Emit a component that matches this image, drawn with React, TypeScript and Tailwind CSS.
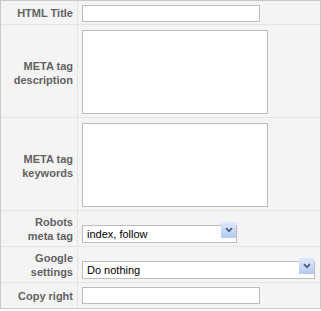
import React from "react"

const labelCls =
  "w-[77px] shrink-0 border-r border-[#e4e4e4] flex items-center justify-end pr-[4px] text-right text-[11px] font-bold leading-[14px] text-[#626262]"

const inputCls =
  "h-[17px] border border-[#bcbcbc] bg-white px-[3px] text-[11px] text-black outline-none"

const SelectBox: React.FC<{ value: string; className: string }> = ({ value, className }) => (
  <div className={`relative h-[18px] ${className}`}>
    <select
      defaultValue={value}
      className="h-full w-full appearance-none border border-[#bcbcbc] bg-white pl-[4px] text-[11px] text-black outline-none"
    >
      <option>{value}</option>
    </select>
    <span className="pointer-events-none absolute bottom-[1px] right-[1px] top-[1px] flex w-[15px] items-center justify-center bg-gradient-to-b from-[#e0e9fb] to-[#b3c9f2]">
      <svg width="8" height="6" viewBox="0 0 8 6">
        <path d="M1 1.2 L4 4.2 L7 1.2" fill="none" stroke="#4b5f86" strokeWidth="1.8" />
      </svg>
    </span>
  </div>
)

const App: React.FC = () => {
  return (
    <div className="h-[311px] w-[321px] bg-white" style={{ fontFamily: '"Liberation Sans", Arial, sans-serif' }}>
      <div className="flex flex-col border border-[#c9c9c9] bg-[#f4f4f4]">
        <div className="flex h-[24px] border-b border-[#e4e4e4]">
          <div className={labelCls}>HTML Title</div>
          <div className="flex flex-1 items-center pl-[4px] pt-[2px]">
            <input type="text" className={`${inputCls} w-[178px]`} />
          </div>
        </div>

        <div className="flex h-[93px] border-b border-[#e4e4e4]">
          <div className={`${labelCls} pt-[4px]`}>
            META tag
            <br />
            description
          </div>
          <div className="flex flex-1 items-start pl-[4px] pt-[5px]">
            <textarea className="h-[84px] w-[186px] resize-none border border-[#bcbcbc] bg-white outline-none" />
          </div>
        </div>

        <div className="flex h-[93px] border-b border-[#e4e4e4]">
          <div className={`${labelCls} pt-[4px]`}>
            META tag
            <br />
            keywords
          </div>
          <div className="flex flex-1 items-start pl-[4px] pt-[5px]">
            <textarea className="h-[84px] w-[186px] resize-none border border-[#bcbcbc] bg-white outline-none" />
          </div>
        </div>

        <div className="flex h-[36px] border-b border-[#e4e4e4]">
          <div className={labelCls}>
            Robots
            <br />
            meta tag
          </div>
          <div className="flex flex-1 items-center pl-[4px] pt-[2px]">
            <SelectBox value="index, follow" className="w-[155px]" />
          </div>
        </div>

        <div className="flex h-[36px] border-b border-[#e4e4e4]">
          <div className={labelCls}>
            Google
            <br />
            settings
          </div>
          <div className="flex flex-1 items-center pl-[4px] pt-[2px]">
            <SelectBox value="Do nothing" className="w-[233px]" />
          </div>
        </div>

        <div className="flex h-[25px]">
          <div className={labelCls}>Copy right</div>
          <div className="flex flex-1 items-center pl-[4px]">
            <input type="text" className={`${inputCls} w-[178px]`} />
          </div>
        </div>
      </div>
    </div>
  )
}

export default App
